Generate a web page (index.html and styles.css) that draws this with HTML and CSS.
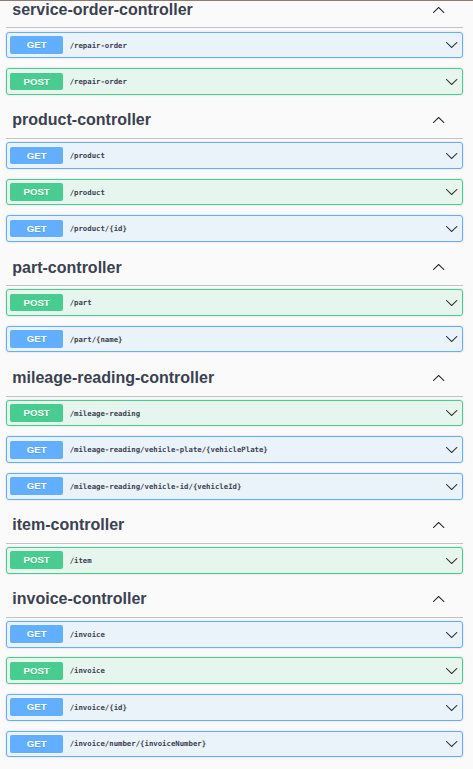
FILE: index.html
```html
<!DOCTYPE html>
<html lang="en">
<head>
<meta charset="utf-8">
<title>API</title>
<link rel="stylesheet" href="styles.css">
</head>
<body>
<svg class="defs" width="0" height="0" aria-hidden="true">
  <defs>
    <symbol id="arrow-down" viewBox="0 0 20 20">
      <path d="M17.418 6.109c.272-.268.709-.268.979 0s.271.701 0 .969l-7.908 7.83c-.27.268-.707.268-.979 0l-7.908-7.83c-.27-.268-.27-.701 0-.969.271-.268.709-.268.979 0L10 13.25l7.418-7.141z"/>
    </symbol>
    <symbol id="arrow-up" viewBox="0 0 20 20">
      <path d="M17.418 14.908C17.69 15.176 18.127 15.176 18.397 14.908C18.667 14.64 18.668 14.207 18.397 13.939L10.489 6.109C10.219 5.841 9.782 5.841 9.51 6.109L1.602 13.939C1.332 14.207 1.332 14.64 1.602 14.908C1.873 15.176 2.311 15.176 2.581 14.908L10 7.767L17.418 14.908Z"/>
    </symbol>
  </defs>
</svg>
<div class="page">
  <section class="tag">
    <h3 class="tag-title"><span class="tag-name">service-order-controller</span><svg class="tag-arrow"><use href="#arrow-up"/></svg></h3>
    <div class="op get"><span class="method">GET</span><span class="path">/repair-order</span><svg class="op-arrow"><use href="#arrow-down"/></svg></div>
    <div class="op post"><span class="method">POST</span><span class="path">/repair-order</span><svg class="op-arrow"><use href="#arrow-down"/></svg></div>
  </section>
  <section class="tag">
    <h3 class="tag-title"><span class="tag-name">product-controller</span><svg class="tag-arrow"><use href="#arrow-up"/></svg></h3>
    <div class="op get"><span class="method">GET</span><span class="path">/product</span><svg class="op-arrow"><use href="#arrow-down"/></svg></div>
    <div class="op post"><span class="method">POST</span><span class="path">/product</span><svg class="op-arrow"><use href="#arrow-down"/></svg></div>
    <div class="op get"><span class="method">GET</span><span class="path">/product/{id}</span><svg class="op-arrow"><use href="#arrow-down"/></svg></div>
  </section>
  <section class="tag">
    <h3 class="tag-title"><span class="tag-name">part-controller</span><svg class="tag-arrow"><use href="#arrow-up"/></svg></h3>
    <div class="op post"><span class="method">POST</span><span class="path">/part</span><svg class="op-arrow"><use href="#arrow-down"/></svg></div>
    <div class="op get"><span class="method">GET</span><span class="path">/part/{name}</span><svg class="op-arrow"><use href="#arrow-down"/></svg></div>
  </section>
  <section class="tag">
    <h3 class="tag-title"><span class="tag-name">mileage-reading-controller</span><svg class="tag-arrow"><use href="#arrow-up"/></svg></h3>
    <div class="op post"><span class="method">POST</span><span class="path">/mileage-reading</span><svg class="op-arrow"><use href="#arrow-down"/></svg></div>
    <div class="op get"><span class="method">GET</span><span class="path">/mileage-reading/vehicle-plate/{vehiclePlate}</span><svg class="op-arrow"><use href="#arrow-down"/></svg></div>
    <div class="op get"><span class="method">GET</span><span class="path">/mileage-reading/vehicle-id/{vehicleId}</span><svg class="op-arrow"><use href="#arrow-down"/></svg></div>
  </section>
  <section class="tag">
    <h3 class="tag-title"><span class="tag-name">item-controller</span><svg class="tag-arrow"><use href="#arrow-up"/></svg></h3>
    <div class="op post"><span class="method">POST</span><span class="path">/item</span><svg class="op-arrow"><use href="#arrow-down"/></svg></div>
  </section>
  <section class="tag">
    <h3 class="tag-title"><span class="tag-name">invoice-controller</span><svg class="tag-arrow"><use href="#arrow-up"/></svg></h3>
    <div class="op get"><span class="method">GET</span><span class="path">/invoice</span><svg class="op-arrow"><use href="#arrow-down"/></svg></div>
    <div class="op post"><span class="method">POST</span><span class="path">/invoice</span><svg class="op-arrow"><use href="#arrow-down"/></svg></div>
    <div class="op get"><span class="method">GET</span><span class="path">/invoice/{id}</span><svg class="op-arrow"><use href="#arrow-down"/></svg></div>
    <div class="op get"><span class="method">GET</span><span class="path">/invoice/number/{invoiceNumber}</span><svg class="op-arrow"><use href="#arrow-down"/></svg></div>
  </section>
</div>
</body>
</html>
```
FILE: styles.css
```css
html {
  background: #fafafa;
}
body {
  margin: 0;
  border-top: 1px solid #8c7d75;
  background: #fafafa;
  font-family: "Liberation Sans", Arial, sans-serif;
  color: #3b4151;
  overflow: hidden;
  height: 768px;
}
.defs {
  position: absolute;
  width: 0;
  height: 0;
  overflow: hidden;
}
.page {
  margin: -6.74px 0 0 6px;
  width: 456.67px;
}
.tag-title {
  display: flex;
  align-items: center;
  box-sizing: border-box;
  height: 34.11px;
  margin: 0 0 3.33px;
  padding: 6.67px 17.27px 9.33px 6.3px;
  border-bottom: 1px solid rgba(59, 65, 81, 0.3);
  font-size: 16px;
  line-height: 17.1px;
  font-weight: 700;
  color: #3b4151;
}
.tag-name {
  flex: 1;
}
.tag-arrow {
  flex: none;
  width: 13.33px;
  height: 13.33px;
  fill: #222;
}
.op {
  display: flex;
  align-items: center;
  box-sizing: border-box;
  height: 26.6px;
  margin: 0 0 9.96px;
  padding: 0 3.33px;
  border: 1px solid;
  border-radius: 3px;
  box-shadow: 0 0 2px rgba(0, 0, 0, 0.19);
}
.op.get {
  border-color: #61affe;
  background: rgba(97, 175, 254, 0.1);
}
.op.post {
  border-color: #49cc90;
  background: rgba(73, 204, 144, 0.1);
}
.method {
  flex: none;
  width: 52.67px;
  height: 17.7px;
  line-height: 17.7px;
  border-radius: 2px;
  text-align: center;
  color: #fff;
  font-size: 9.6px;
  font-weight: 700;
  text-shadow: 0 1px 0 rgba(0, 0, 0, 0.1);
}
.get .method {
  background: #61affe;
}
.post .method {
  background: #49cc90;
}
.path {
  flex: 1;
  padding: 0 6.67px;
  font-family: "DejaVu Sans Mono", "Liberation Mono", monospace;
  font-size: 7.32px;
  font-weight: 600;
  color: #3b4151;
  white-space: nowrap;
}
.op-arrow {
  flex: none;
  width: 13.33px;
  height: 13.33px;
  fill: #333;
}
```
